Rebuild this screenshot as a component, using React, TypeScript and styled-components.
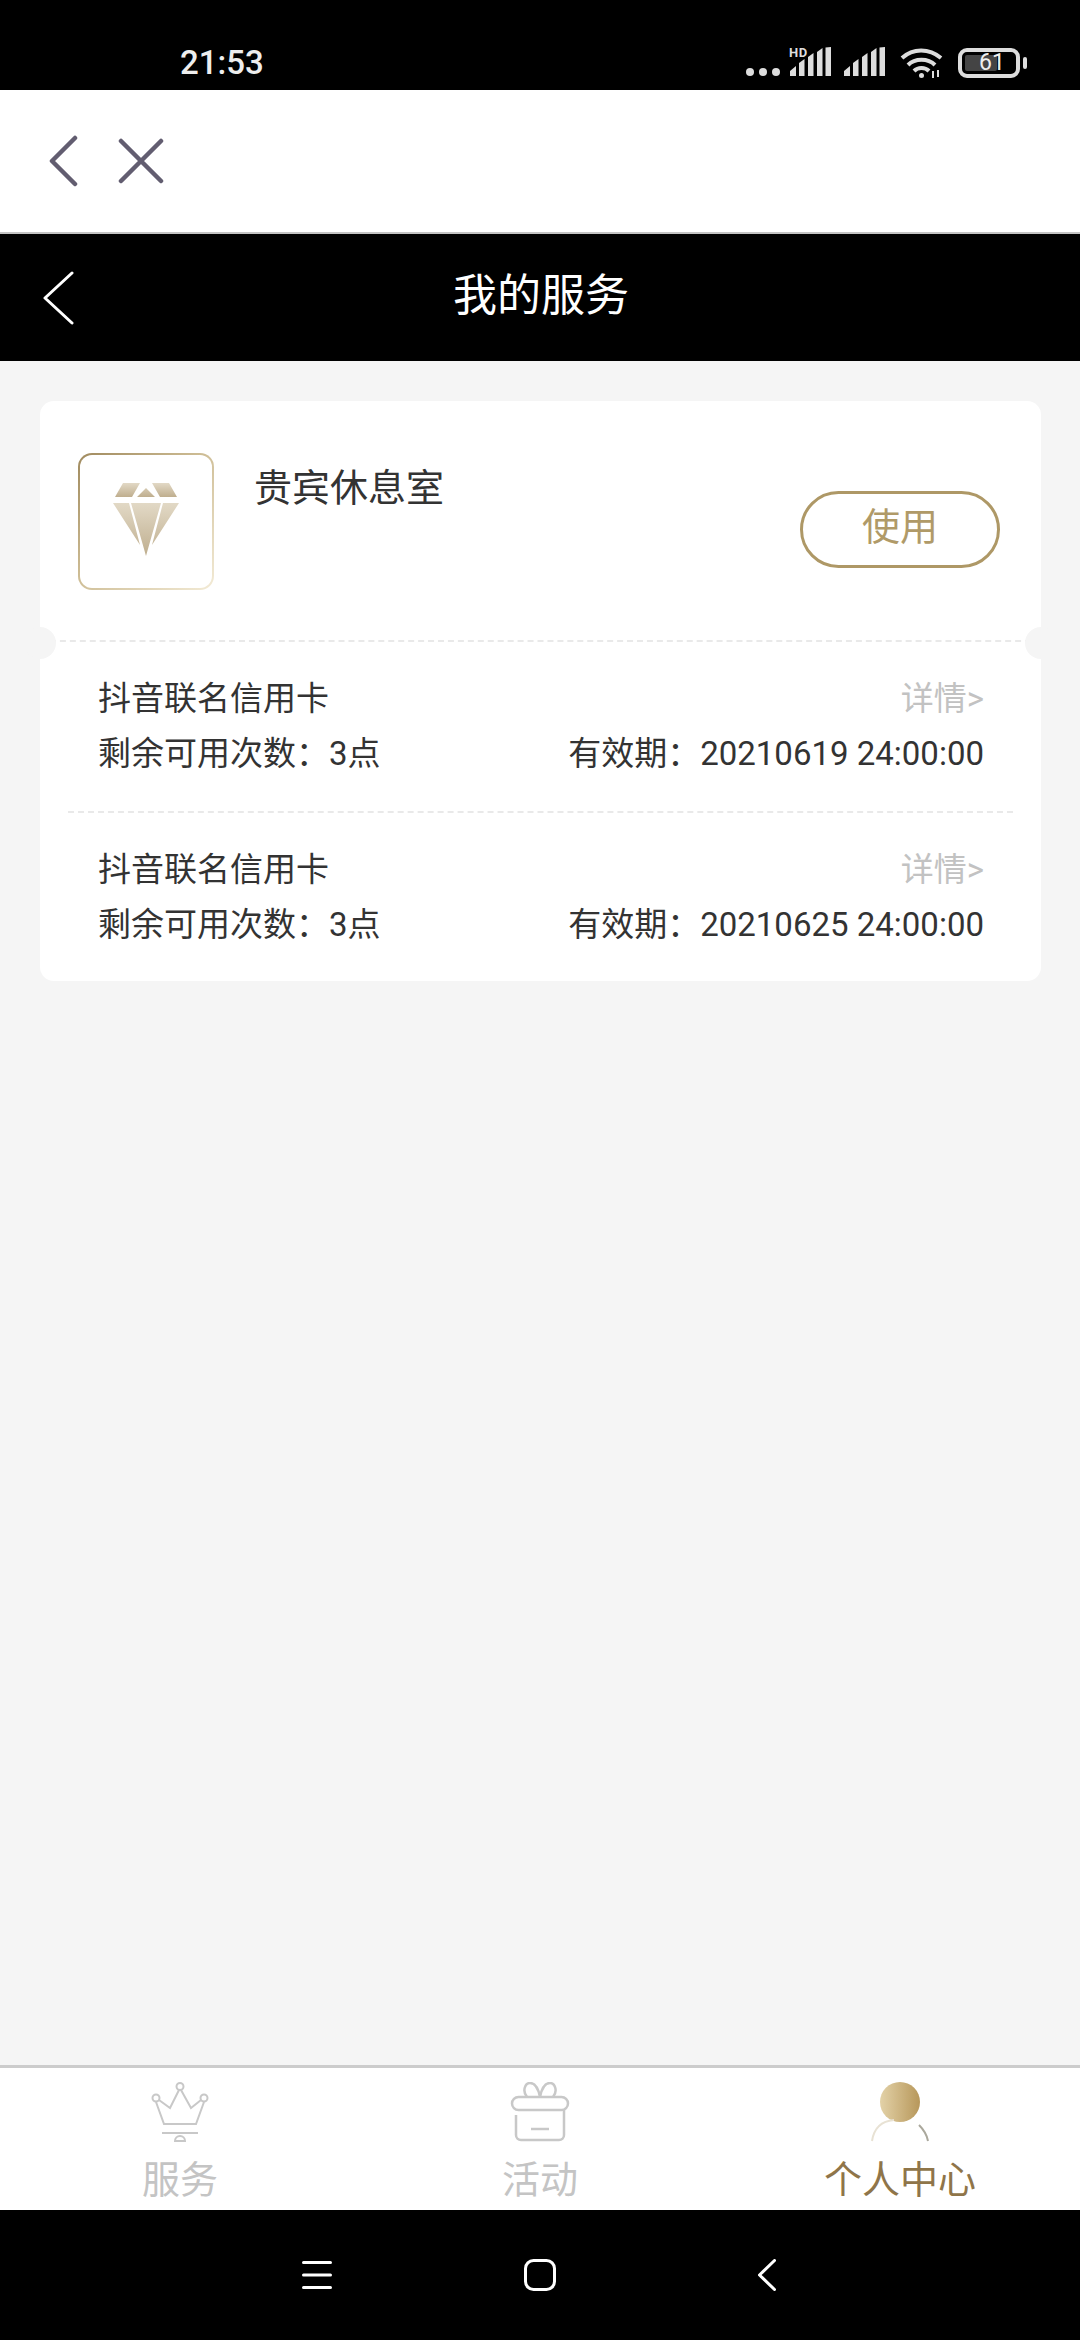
import React from "react";
import styled, { createGlobalStyle } from "styled-components";

const Global = createGlobalStyle`
  html, body { margin: 0; padding: 0; background: #f5f5f5; }
  * { box-sizing: border-box; }
  body { font-family: Roboto, "Noto Sans CJK SC", "Noto Sans", sans-serif; color: #333; }
`;

const Page = styled.div`
  width: 1080px;
  height: 2340px;
  display: flex;
  flex-direction: column;
  overflow: hidden;
`;

const StatusBar = styled.div`
  height: 90px;
  flex: none;
  background: #000;
  display: flex;
  align-items: flex-start;
  justify-content: space-between;
  padding: 0 60px 0 180px;
`;
const Time = styled.div`
  margin-top: 44px;
  font: 500 33px/38px Roboto, sans-serif;
  color: #eee;
`;
const StatusIcons = styled.div`
  margin-top: 47px;
  display: flex;
  align-items: flex-start;
`;
const Dots = styled.svg`
  width: 36px;
  height: 10px;
  margin: 20px 9px 0 0;
`;
const SignalWrap = styled.div`
  position: relative;
  width: 41px;
  height: 30px;
  margin-right: ${(p: { $mr: number }) => p.$mr}px;
`;
const Hd = styled.span`
  position: absolute;
  left: -1px;
  top: -1px;
  font: 700 13px/13px Roboto, sans-serif;
  color: #ddd;
  letter-spacing: 0.5px;
`;
const Wifi = styled.svg`
  width: 44px;
  height: 32px;
  margin-right: 14px;
`;
const Battery = styled.div`
  position: relative;
  width: 62px;
  height: 30px;
  border: 4px solid #ddd;
  border-radius: 9px;
  font: 400 23px/22px Roboto, sans-serif;
  color: #eee;
  text-align: center;
  padding-left: 6px;
  margin-top: 1px;
  &::before {
    content: "";
    position: absolute;
    left: 3px;
    top: 3px;
    bottom: 3px;
    width: 32px;
    background: #444;
    border-radius: 2px;
  }
  &::after {
    content: "";
    position: absolute;
    right: -11px;
    top: 5px;
    width: 4px;
    height: 12px;
    background: #ddd;
    border-radius: 2px;
  }
`;
const BatteryText = styled.span`
  position: relative;
`;

const BrowserBar = styled.div`
  height: 144px;
  flex: none;
  background: #fff;
  border-bottom: 2px solid #c4c4c4;
  display: flex;
  align-items: center;
  padding: 0 0 0 48px;
  gap: 40px;
`;
const ToolIcon = styled.svg`
  display: block;
  flex: none;
`;

const TitleBar = styled.div`
  height: 127px;
  flex: none;
  background: #000;
  display: grid;
  grid-template-columns: 1fr auto 1fr;
  align-items: center;
  padding: 0 0 0 42px;
`;
const Title = styled.div`
  font-size: 44px;
  line-height: 60px;
  color: #fff;
  margin: 0 40px 3px 0;
`;

const Main = styled.main`
  flex: 1;
  background: #f5f5f5;
  padding: 40px 39px 0 40px;
`;
const Card = styled.section`
  position: relative;
  background: #fff;
  border-radius: 14px;
`;
const CardHead = styled.div`
  height: 241px;
  display: flex;
  align-items: flex-start;
  padding: 52px 41px 0 38px;
  border-bottom: 2px dashed #e9e9e9;
  margin: 0;
`;
const Thumb = styled.div`
  width: 136px;
  height: 137px;
  flex: none;
  border-radius: 14px;
  padding: 2px;
  background: linear-gradient(135deg, #a08a5e 0%, #cdbc94 45%, #f3ebd6 100%);
  display: flex;
`;
const ThumbInner = styled.div`
  flex: 1;
  border-radius: 12px;
  background: #fff;
  display: flex;
  align-items: center;
  justify-content: center;
  padding-bottom: 4px;
`;
const ServiceName = styled.div`
  margin: 13px 0 0 40px;
  font-size: 38px;
  line-height: 44px;
  color: #333;
`;
const UseButton = styled.button`
  margin: 38px 0 0 auto;
  width: 200px;
  height: 77px;
  border: 3px solid #ae9866;
  border-radius: 39px;
  background: #fff;
  color: #b09a68;
  font-family: inherit;
  font-size: 38px;
  line-height: 60px;
  padding: 0 0 6px;
`;
const Notch = styled.span<{ $side: "left" | "right" }>`
  position: absolute;
  top: 226px;
  ${(p) => p.$side}: -16px;
  width: 32px;
  height: 32px;
  border-radius: 50%;
  background: #f5f5f5;
`;
const Row = styled.div<{ $last?: boolean }>`
  height: ${(p) => (p.$last ? 168 : 171)}px;
  margin: 0 28px;
  padding: 26px 29px 0 30px;
  border-bottom: ${(p) => (p.$last ? "none" : "2px dashed #e9e9e9")};
`;
const RowLine = styled.div<{ $h: number }>`
  display: flex;
  justify-content: space-between;
  align-items: center;
  height: ${(p) => p.$h}px;
  font-size: 33px;
  white-space: nowrap;
  color: #333;
`;
const Detail = styled.span`
  color: #c2c2c2;
`;

const TabBar = styled.nav`
  height: 145px;
  flex: none;
  background: #fff;
  border-top: 3px solid #cccccc;
  display: grid;
  grid-template-columns: repeat(3, 1fr);
`;
const Tab = styled.div`
  display: flex;
  flex-direction: column;
  align-items: center;
  padding-top: 14px;
`;
const TabIcon = styled.svg`
  width: 60px;
  height: 60px;
  display: block;
`;
const TabLabel = styled.div<{ $active?: boolean }>`
  margin-top: 13px;
  font-size: 38px;
  line-height: 50px;
  color: ${(p) => (p.$active ? "#8f7549" : "#c4c4c4")};
`;

const SystemNav = styled.div`
  height: 130px;
  flex: none;
  background: #000;
  display: flex;
  align-items: center;
  padding: 0 0 0 302px;
`;
const SysMenu = styled.svg`
  width: 30px;
  height: 30px;
  margin-right: 192px;
`;
const SysHome = styled.svg`
  width: 32px;
  height: 32px;
  margin-right: 202px;
`;
const SysBack = styled.svg`
  width: 18px;
  height: 32px;
`;

const SignalBars = () => (
  <svg width="41" height="30" viewBox="0 0 41 30" style={{ position: "absolute", left: 0, top: 0 }}>
    <path
      fill="#ddd"
      d="M0 29v-5l6-5v10zM9 29V16l5.500-4v17zM18 29V10l5.500-4v23zM27 29V5l5.500-4v28zM35.500 29V0.500l5.500-0.500v29z"
    />
  </svg>
);

const rows = [
  { name: "抖音联名信用卡", date: "有效期：20210619 24:00:00" },
  { name: "抖音联名信用卡", date: "有效期：20210625 24:00:00" },
];

export default function App() {
  return (
    <Page>
      <Global />
      <StatusBar>
        <Time>21:53</Time>
        <StatusIcons>
          <Dots viewBox="0 0 36 10">
            <circle cx="5" cy="5" r="4" fill="#ddd" />
            <circle cx="18" cy="5" r="4" fill="#ddd" />
            <circle cx="31" cy="5" r="4" fill="#ddd" />
          </Dots>
          <SignalWrap $mr={13}>
            <SignalBars />
            <Hd>HD</Hd>
          </SignalWrap>
          <SignalWrap $mr={15}>
            <SignalBars />
          </SignalWrap>
          <Wifi viewBox="0 0 44 32" fill="none" stroke="#ddd" strokeWidth="4">
            <path d="M2 11C13 1 29 1 41 11" />
            <path d="M8 18C15 11 28 11 35 18" />
            <path d="M14 24C18 20 25 20 29 24" />
            <circle cx="21.500" cy="28.500" r="2.500" fill="#ddd" stroke="none" />
            <path d="M33 24v7M38 23v7" strokeWidth="2" />
          </Wifi>
          <Battery>
            <BatteryText>61</BatteryText>
          </Battery>
        </StatusIcons>
      </StatusBar>

      <BrowserBar>
        <ToolIcon width="30" height="52" viewBox="0 0 30 52" fill="none" stroke="#625d70" strokeWidth="4.500" strokeLinecap="round" strokeLinejoin="round">
          <path d="M27 3L4 26l23 23" />
        </ToolIcon>
        <ToolIcon width="46" height="46" viewBox="0 0 46 46" fill="none" stroke="#625d70" strokeWidth="4.500" strokeLinecap="round">
          <path d="M3 3l40 40M43 3L3 43" />
        </ToolIcon>
      </BrowserBar>

      <TitleBar>
        <ToolIcon width="32" height="54" viewBox="0 0 32 54" fill="none" stroke="#fff" strokeWidth="3" strokeLinecap="round" strokeLinejoin="round">
          <path d="M30 2L3 27l27 25" />
        </ToolIcon>
        <Title>我的服务</Title>
        <span />
      </TitleBar>

      <Main>
        <Card>
          <CardHead>
            <Thumb>
              <ThumbInner>
                <svg width="66" height="73" viewBox="0 0 66 73">
                  <defs>
                    <linearGradient id="dia" x1="0" y1="0" x2="0" y2="1">
                      <stop offset="0" stopColor="#e2d9c6" />
                      <stop offset="1" stopColor="#bfae8e" />
                    </linearGradient>
                  </defs>
                  <g fill="url(#dia)">
                    <path d="M10 0h17L19 14H2zM39 0h17l8 14H47zM33 5l9 9H24z" />
                    <path d="M0 20h16l11 42zM18 20h30L33 73zM50 20h16L39 62z" />
                  </g>
                </svg>
              </ThumbInner>
            </Thumb>
            <ServiceName>贵宾休息室</ServiceName>
            <UseButton>使用</UseButton>
          </CardHead>
          <Notch $side="left" />
          <Notch $side="right" />
          {rows.map((r, i) => (
            <Row key={r.date} $last={i === rows.length - 1}>
              <RowLine $h={55}>
                <span>{r.name}</span>
                <Detail>详情&gt;</Detail>
              </RowLine>
              <RowLine $h={55}>
                <span>剩余可用次数：3点</span>
                <span>{r.date}</span>
              </RowLine>
            </Row>
          ))}
        </Card>
      </Main>

      <TabBar>
        <Tab>
          <TabIcon viewBox="0 0 60 60" fill="none" stroke="#c8c8c8" strokeWidth="2">
            <circle cx="30" cy="4.500" r="3.500" />
            <circle cx="6" cy="16" r="3.500" />
            <circle cx="54" cy="16" r="3.500" />
            <path d="M9 18l11 8L29 8M31 8l10 18 10-8M6 20l8 22h32l8-22" />
            <path d="M12 51h36" />
            <path d="M25 59a5 5 0 0 1 10 0z" />
          </TabIcon>
          <TabLabel>服务</TabLabel>
        </Tab>
        <Tab>
          <TabIcon viewBox="0 0 60 60" fill="none" stroke="#c8c8c8" strokeWidth="2.500">
            <rect x="2" y="15" width="56" height="13" rx="6.500" />
            <path d="M30 15C28 5 24 1 20 1c-5 0-8 8-3 14M30 15C32 5 36 1 40 1c5 0 8 8 3 14" />
            <path d="M6 33v20a5 5 0 0 0 5 5h38a5 5 0 0 0 5-5V28" />
            <path d="M21 47h18" />
          </TabIcon>
          <TabLabel>活动</TabLabel>
        </Tab>
        <Tab>
          <TabIcon viewBox="0 0 60 60" fill="none">
            <defs>
              <linearGradient id="head" x1="0" y1="0" x2="1" y2="0">
                <stop offset="0" stopColor="#e3d2a8" />
                <stop offset="1" stopColor="#b7975a" />
              </linearGradient>
            </defs>
            <circle cx="30" cy="20" r="20" fill="url(#head)" />
            <path d="M2 59C4 46 12 39 24 38" stroke="#e8e2d4" strokeWidth="2" />
            <path d="M49 43c4 4 8 10 9 16" stroke="#aaa89c" strokeWidth="2" />
          </TabIcon>
          <TabLabel $active>个人中心</TabLabel>
        </Tab>
      </TabBar>

      <SystemNav>
        <SysMenu viewBox="0 0 30 30" stroke="#fff" strokeWidth="3" strokeLinecap="round">
          <path d="M1.500 2.500h27M1.500 15h27M1.500 27.500h27" />
        </SysMenu>
        <SysHome viewBox="0 0 32 32" fill="none" stroke="#fff" strokeWidth="3">
          <rect x="1.500" y="1.500" width="29" height="29" rx="8" />
        </SysHome>
        <SysBack viewBox="0 0 18 32" fill="none" stroke="#fff" strokeWidth="3" strokeLinecap="round" strokeLinejoin="round">
          <path d="M16.500 1.500L1.500 16l15 14.500" />
        </SysBack>
      </SystemNav>
    </Page>
  );
}
